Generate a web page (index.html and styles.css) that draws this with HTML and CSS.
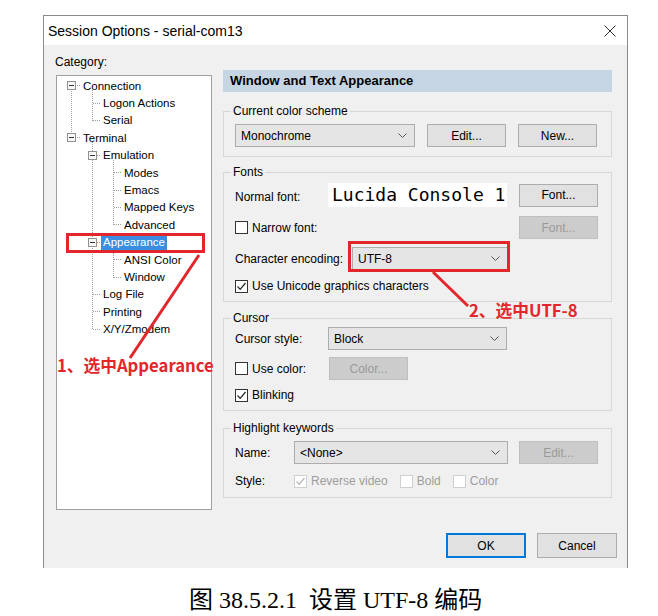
FILE: index.html
```html
<!DOCTYPE html>
<html lang="zh">
<head>
<meta charset="utf-8">
<title>Session Options - serial-com13</title>
<link rel="stylesheet" href="styles.css">
</head>
<body>
<div class="page">
  <div class="dialog">
    <div class="titlebar">
      <span class="title">Session Options - serial-com13</span>
      <svg class="close" width="12" height="12" viewBox="0 0 12 12"><path d="M0.5 0.5 L11.5 11.5 M11.5 0.5 L0.5 11.5" stroke="#333" stroke-width="1" fill="none"/></svg>
    </div>
    <div class="dlg-body">
      <div class="main">
        <div class="left">
          <div class="cat-label">Category:</div>
          <div class="tree">
            <svg class="tree-lines" width="154" height="300" viewBox="0 0 154 300">
              <g stroke="#a0a0a0" stroke-width="1" stroke-dasharray="1 1" fill="none">
                <path d="M14.5 9 V62"/>
                <path d="M14 9.5 H24 M14 61.5 H24"/>
                <path d="M35.5 14 V45"/>
                <path d="M36 27.5 H44 M36 44.5 H44"/>
                <path d="M35.5 66 V254"/>
                <path d="M36 79.5 H44 M36 166.5 H44 M36 218.5 H44 M36 235.5 H44 M36 253.5 H44"/>
                <path d="M56.5 84 V149"/>
                <path d="M57 96.5 H65 M57 114.5 H65 M57 131.5 H65 M57 148.5 H65"/>
                <path d="M56.5 171 V202"/>
                <path d="M57 183.5 H65 M57 201.5 H65"/>
              </g>
              <g stroke="#919191" stroke-width="1" fill="#f7f7f7">
                <rect x="10.5" y="5.5" width="8" height="8"/>
                <rect x="10.5" y="57.5" width="8" height="8"/>
                <rect x="31.5" y="75.5" width="8" height="8"/>
                <rect x="31.5" y="162.5" width="8" height="8"/>
              </g>
              <g fill="#333">
                <rect x="12" y="9" width="5" height="1"/>
                <rect x="12" y="61" width="5" height="1"/>
                <rect x="33" y="79" width="5" height="1"/>
                <rect x="33" y="166" width="5" height="1"/>
              </g>
            </svg>
            <div class="node l1"><span class="lbl">Connection</span></div>
            <div class="node l2"><span class="lbl">Logon Actions</span></div>
            <div class="node l2"><span class="lbl">Serial</span></div>
            <div class="node l1"><span class="lbl">Terminal</span></div>
            <div class="node l2"><span class="lbl">Emulation</span></div>
            <div class="node l3"><span class="lbl">Modes</span></div>
            <div class="node l3"><span class="lbl">Emacs</span></div>
            <div class="node l3"><span class="lbl">Mapped Keys</span></div>
            <div class="node l3"><span class="lbl">Advanced</span></div>
            <div class="node l2"><span class="lbl selected">Appearance</span></div>
            <div class="node l3"><span class="lbl">ANSI Color</span></div>
            <div class="node l3"><span class="lbl">Window</span></div>
            <div class="node l2"><span class="lbl">Log File</span></div>
            <div class="node l2"><span class="lbl">Printing</span></div>
            <div class="node l2"><span class="lbl">X/Y/Zmodem</span></div>
          </div>
        </div>

        <div class="right">
          <div class="panel-head">Window and Text Appearance</div>

          <fieldset class="group group-scheme">
            <legend>Current color scheme</legend>
            <div class="row">
              <div class="combo w-scheme"><span class="val">Monochrome</span><svg class="chev" width="9" height="5" viewBox="0 0 9 5"><path d="M0.5 0.5 L4.5 4.5 L8.5 0.5" stroke="#555" fill="none"/></svg></div>
              <div class="btn">Edit...</div>
              <div class="btn">New...</div>
            </div>
          </fieldset>

          <fieldset class="group group-fonts">
            <legend>Fonts</legend>
            <div class="row row-tall">
              <span class="lbl-text w-93 nudge">Normal font:</span>
              <div class="fontbox">Lucida Console 1</div>
              <div class="btn push">Font...</div>
            </div>
            <div class="row gap-9">
              <label class="check"><span class="cb"></span><span>Narrow font:</span></label>
              <div class="btn push disabled">Font...</div>
            </div>
            <div class="row gap-8">
              <span class="lbl-text w-117">Character encoding:</span>
              <div class="combo w-enc"><span class="val">UTF-8</span><svg class="chev" width="9" height="5" viewBox="0 0 9 5"><path d="M0.5 0.5 L4.5 4.5 L8.5 0.5" stroke="#555" fill="none"/></svg></div>
            </div>
            <div class="row row-short gap-9">
              <label class="check"><span class="cb"><svg width="11" height="11" viewBox="0 0 11 11"><path d="M1.5 5.5 L4.2 8.3 L9.5 2" stroke="#222" stroke-width="1.2" fill="none"/></svg></span><span>Use Unicode graphics characters</span></label>
            </div>
          </fieldset>

          <fieldset class="group group-cursor">
            <legend>Cursor</legend>
            <div class="row">
              <span class="lbl-text w-93">Cursor style:</span>
              <div class="combo w-cursor"><span class="val">Block</span><svg class="chev" width="9" height="5" viewBox="0 0 9 5"><path d="M0.5 0.5 L4.5 4.5 L8.5 0.5" stroke="#555" fill="none"/></svg></div>
            </div>
            <div class="row gap-7">
              <label class="check w-94"><span class="cb"></span><span>Use color:</span></label>
              <div class="btn disabled">Color...</div>
            </div>
            <div class="row row-short gap-8">
              <label class="check"><span class="cb"><svg width="11" height="11" viewBox="0 0 11 11"><path d="M1.5 5.5 L4.2 8.3 L9.5 2" stroke="#222" stroke-width="1.2" fill="none"/></svg></span><span>Blinking</span></label>
            </div>
          </fieldset>

          <fieldset class="group group-hl">
            <legend>Highlight keywords</legend>
            <div class="row">
              <span class="lbl-text w-59">Name:</span>
              <div class="combo w-name"><span class="val">&lt;None&gt;</span><svg class="chev" width="9" height="5" viewBox="0 0 9 5"><path d="M0.5 0.5 L4.5 4.5 L8.5 0.5" stroke="#555" fill="none"/></svg></div>
              <div class="btn push disabled">Edit...</div>
            </div>
            <div class="row row-short gap-10">
              <span class="lbl-text w-59">Style:</span>
              <label class="check dim"><span class="cb"><svg width="11" height="11" viewBox="0 0 11 11"><path d="M1.5 5.5 L4.2 8.3 L9.5 2" stroke="#b5b5b5" stroke-width="1.2" fill="none"/></svg></span><span>Reverse video</span></label>
              <label class="check dim gap-l"><span class="cb"></span><span>Bold</span></label>
              <label class="check dim gap-s"><span class="cb"></span><span>Color</span></label>
            </div>
          </fieldset>
        </div>
      </div>

      <div class="actions">
        <div class="btn btn-wide default">OK</div>
        <div class="btn btn-wide">Cancel</div>
      </div>
    </div>
  </div>

  <p class="caption">图 38.5.2.1&nbsp;&nbsp;设置 UTF-8 编码</p>

  <svg class="annot" width="658" height="616" viewBox="0 0 658 616">
    <g stroke="#e3262b" stroke-width="3" fill="none">
      <rect x="67.5" y="234.5" width="136" height="17"/>
      <rect x="349.5" y="242.5" width="159" height="28"/>
      <path d="M199 255 L130 358"/>
      <path d="M433 272 L468 306"/>
    </g>
  </svg>
  <div class="note note-1">1、选中Appearance</div>
  <div class="note note-2">2、选中UTF-8</div>
</div>
</body>
</html>
```

FILE: styles.css
```css
* { box-sizing: border-box; }

html, body { margin: 0; padding: 0; background: #fff; }

body {
  font-family: "Liberation Sans", Arial, "Noto Sans CJK SC", sans-serif;
  font-size: 12px;
  color: #000;
}

.page {
  position: relative;
  width: 658px;
  height: 616px;
  padding: 15px 0 0 43px;
  overflow: hidden;
}

/* ---------- dialog frame ---------- */
.dialog {
  width: 585px;
  height: 553px;
  border: 1px solid #8a8a8a;
  border-bottom: none;
  background: #f0f0f0;
  display: flex;
  flex-direction: column;
}

.titlebar {
  height: 29px;
  flex: none;
  background: #fff;
  display: flex;
  align-items: center;
  justify-content: space-between;
  padding: 0 11px 0 4px;
}

.title { font-size: 14px; color: #000; }

.close { display: block; }

.dlg-body {
  flex: 1;
  padding: 10px 10px 0 12px;
  display: flex;
  flex-direction: column;
}

.main { display: flex; gap: 11px; align-items: flex-start; }

/* ---------- category tree ---------- */
.left { width: 156px; flex: none; }

.cat-label { height: 14px; line-height: 14px; margin-left: -1px; }

.tree {
  position: relative;
  margin-top: 6px;
  height: 435px;
  border: 1px solid #a0a0a0;
  background: #fff;
  padding-top: 1px;
  font-size: 11.5px;
}

.tree-lines { position: absolute; left: 0; top: 0; }

.node {
  position: relative;
  height: 17.4px;
  display: flex;
  align-items: center;
}
.node.l1 { padding-left: 24px; }
.node.l2 { padding-left: 44px; }
.node.l3 { padding-left: 65px; }

.lbl { padding: 0 2px; line-height: 16px; white-space: nowrap; }
.lbl.selected { background: #3a8ee2; color: #fff; }

/* ---------- right panel ---------- */
.right { width: 389px; flex: none; margin-top: 15px; }

.panel-head {
  height: 22px;
  background: #c6d5e4;
  font-weight: bold;
  font-size: 13px;
  line-height: 22px;
  padding-left: 7px;
}

.group {
  margin: 0;
  min-width: 0;
  border: 1px solid #d7d7d7;
  padding: 6px 13px 9px 11px;
}
.group legend {
  padding: 0 2px;
  margin-left: -4px;
  line-height: 14px;
  font-size: 12px;
}

.group-scheme { margin-top: 12px; }
.group-fonts  { margin-top: 8px; padding-top: 4px; padding-bottom: 8px; }
.group-cursor { margin-top: 9px; padding-top: 2px; padding-bottom: 8px; }
.group-hl     { margin-top: 10px; padding-top: 6px; padding-bottom: 9px; }

.row { display: flex; align-items: center; height: 23px; gap: 12px; }
.row-tall { height: 24px; gap: 0; }
.row-short { height: 14px; }
.gap-7 { margin-top: 7px; }
.gap-8 { margin-top: 8px; }
.gap-9 { margin-top: 9px; }
.gap-10 { margin-top: 10px; }

.group-fonts .row,
.group-cursor .row,
.group-hl .row { gap: 0; }

.lbl-text { flex: none; white-space: nowrap; }
.nudge { padding-top: 4px; }
.w-59 { width: 59px; }
.w-93 { width: 93px; }
.w-94 { width: 94px; }
.w-117 { width: 117px; }

.push { margin-left: auto; }

/* combo box */
.combo {
  flex: none;
  height: 23px;
  display: flex;
  align-items: center;
  justify-content: space-between;
  padding: 0 7px 0 5px;
  background: #e5e5e5;
  border: 1px solid #acacac;
}
.combo .chev { display: block; }
.w-scheme { width: 180px; }
.w-enc { width: 156px; }
.w-cursor { width: 179px; }
.w-name { width: 214px; }

/* push buttons */
.btn {
  flex: none;
  width: 79px;
  height: 23px;
  display: flex;
  align-items: center;
  justify-content: center;
  background: #e1e1e1;
  border: 1px solid #adadad;
  color: #000;
}
.btn.disabled {
  background: #cccccc;
  border-color: #bfbfbf;
  color: #9a9a9a;
}

/* font preview */
.fontbox {
  flex: none;
  width: 179px;
  height: 24px;
  background: #fff;
  white-space: nowrap;
  font-family: "DejaVu Sans Mono", "Liberation Mono", monospace;
  font-size: 18px;
  line-height: 24px;
  padding-left: 4px;
}

/* checkboxes */
.check {
  display: flex;
  align-items: center;
  white-space: nowrap;
  flex: none;
}
.cb {
  width: 13px;
  height: 13px;
  border: 1px solid #333;
  background: #fff;
  margin-right: 4px;
  display: flex;
  align-items: center;
  justify-content: center;
}
.cb svg { display: block; }
.check.dim { color: #9d9d9d; }
.check.dim .cb { border-color: #cfcfcf; }
.gap-l { margin-left: 12px; }
.gap-s { margin-left: 12px; }

/* dialog buttons */
.actions {
  display: flex;
  justify-content: flex-end;
  gap: 11px;
  margin-top: 23px;
}
.btn-wide { width: 80px; height: 25px; }
.btn.default { border: 2px solid #0078d7; }

/* ---------- caption ---------- */
.caption {
  margin: 18px 0 0 146px;
  font-family: "Liberation Serif", "Noto Sans CJK SC", serif;
  font-size: 24px;
  line-height: 28px;
  white-space: nowrap;
}

/* ---------- red annotations (overlay) ---------- */
.annot { position: absolute; left: 0; top: 0; pointer-events: none; }

.note {
  position: absolute;
  color: #e3262b;
  font-family: "Noto Sans CJK SC", sans-serif;
  font-weight: bold;
  font-size: 16.7px;
  line-height: 17px;
  white-space: nowrap;
}
.note-1 { left: 57px; top: 357px; }
.note-2 { left: 469px; top: 302px; }
```
